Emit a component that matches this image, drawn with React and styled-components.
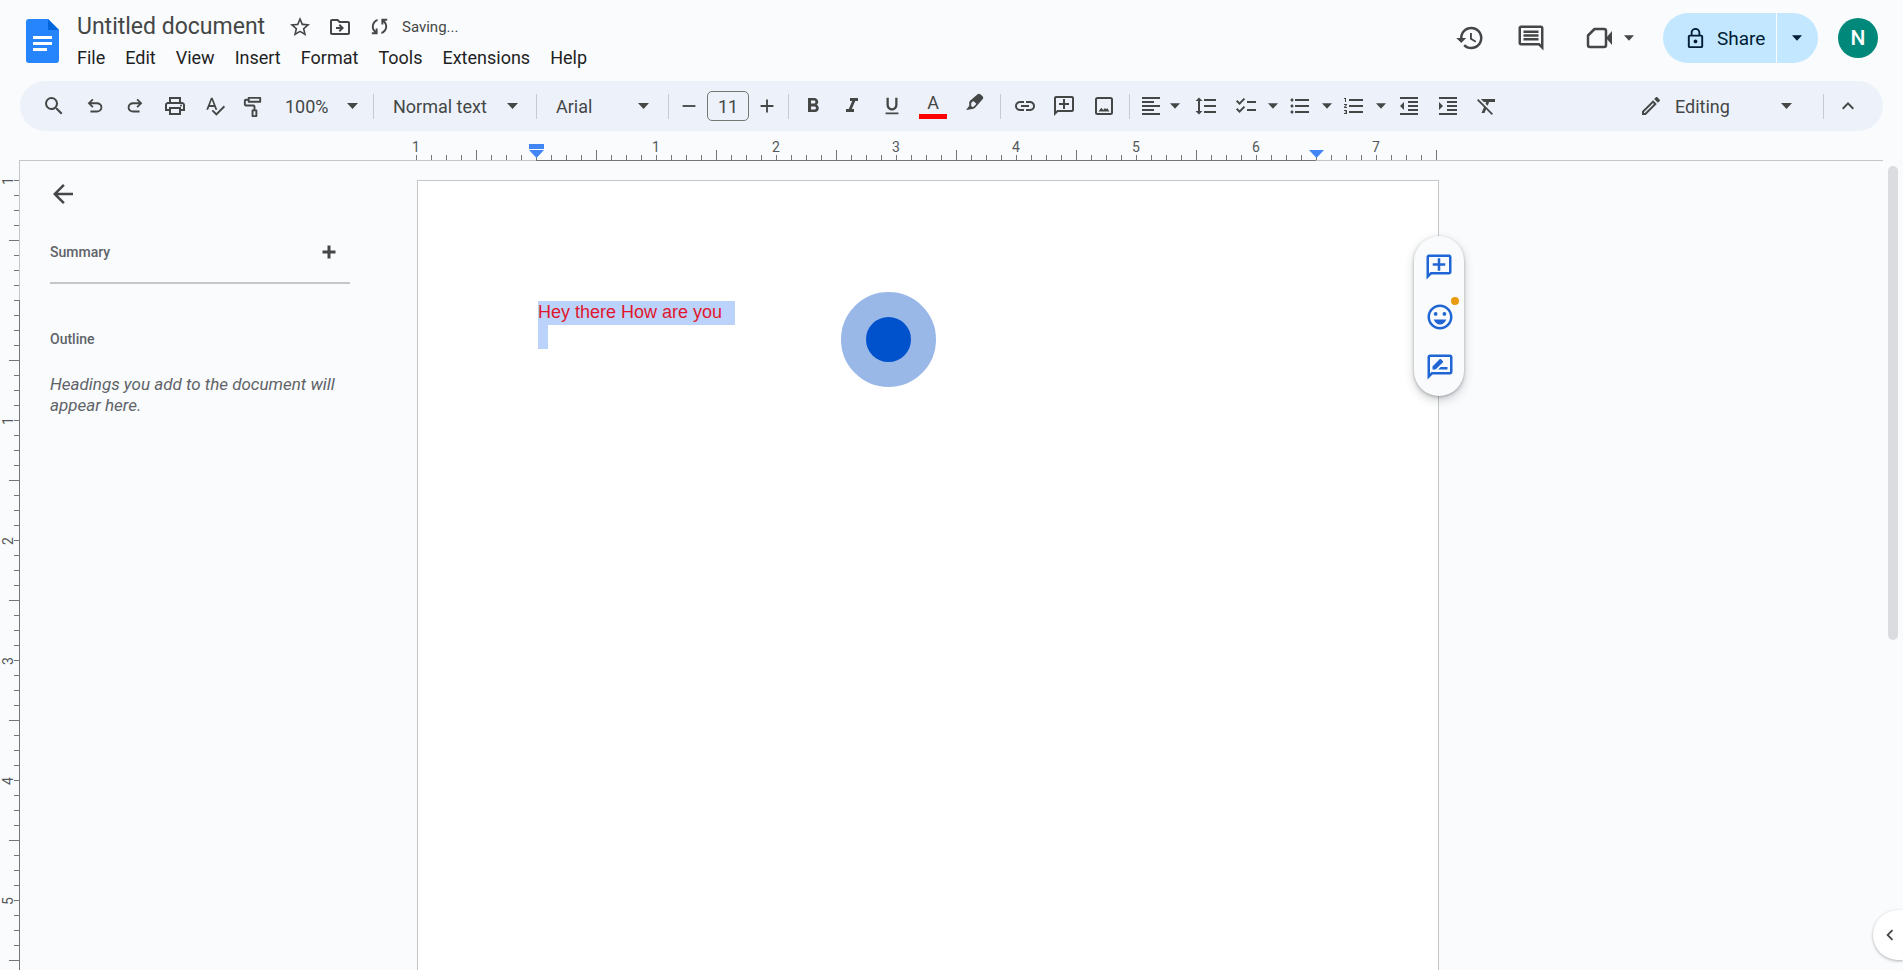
import React from 'react';
import styled, { createGlobalStyle, css } from 'styled-components';
import {
  MdAdd, MdArrowBack, MdChecklist, MdExpandLess, MdChevronLeft, MdFormatAlignLeft, MdFormatBold,
  MdFormatClear, MdFormatIndentDecrease, MdFormatIndentIncrease, MdFormatItalic, MdFormatLineSpacing,
  MdFormatListBulleted, MdFormatListNumbered, MdFormatUnderlined, MdHistory, MdLink, MdLockOutline,
  MdOutlineAddComment, MdOutlineComment, MdOutlineDriveFileMove, MdOutlineEdit, MdOutlineEmojiEmotions,
  MdOutlineImagesearchRoller, MdOutlinePrint, MdOutlineRateReview, MdRemove, MdSearch,
  MdSpellcheck, MdStarOutline,
} from 'react-icons/md';

const ink = '#444746';
const rule = '#c4c7c5';
const ruleDark = '#747775';
const INCH = 120;

const GlobalStyle = createGlobalStyle`
  *, *::before, *::after { box-sizing: border-box; }
  body { margin: 0; background: #f9fbfd; color: ${ink}; font-family: Roboto, "Liberation Sans", sans-serif; }
  button, input, select { font: inherit; color: inherit; margin: 0; padding: 0; border: 0; background: none; }
  button { cursor: pointer; }
  svg { display: block; flex: none; }
`;

const Shell = styled.div`
  display: flex;
  flex-direction: column;
  height: 100vh;
  overflow: hidden;
  position: relative;
`;

/* Header */
const Header = styled.header`
  display: flex;
  align-items: flex-start;
  height: 81px;
  flex: none;
  padding: 0 25px 0 26px;
`;
const Logo = styled.a`
  padding-top: 19px;
  width: 51px;
`;
const TitleBlock = styled.div`
  padding-top: 10px;
`;
const TitleRow = styled.div`
  display: flex;
  align-items: center;
  height: 33px;
`;
const TitleInput = styled.input`
  width: 203px;
  height: 32px;
  font-size: 23px;
`;
const IconButton = styled.button`
  display: flex;
  align-items: center;
  justify-content: center;
  width: ${(p) => p.$w || 39}px;
  height: 38px;
  flex: none;
  svg { ${(p) => p.$flip && css`transform: scaleX(-1);`} }
`;
const SaveState = styled.span`
  font-size: 15px;
  padding-left: 3px;
`;
const MenuBar = styled.nav`
  display: flex;
  gap: 20px;
  height: 28px;
  align-items: center;
`;
const MenuItem = styled.button`
  font-size: 18px;
  color: #1f1f1f;
`;
const HeaderActions = styled.div`
  display: flex;
  align-items: center;
  margin-left: auto;
  padding-top: 13px;
`;
const MeetButton = styled.button`
  display: flex;
  align-items: center;
  gap: 11px;
  padding: 0 29px 0 25px;
`;
const ShareGroup = styled.div`
  display: flex;
  gap: 1px;
  height: 50px;
  margin-right: 20px;
  color: #001d35;
`;
const ShareButton = styled.button`
  display: flex;
  align-items: center;
  gap: 10px;
  width: 113px;
  padding-left: 21px;
  font-size: 19px;
  background: #c2e7ff;
  border-radius: 25px 0 0 25px;
`;
const ShareMore = styled.button`
  display: flex;
  align-items: center;
  width: 41px;
  padding-left: 15px;
  background: #c2e7ff;
  border-radius: 0 25px 25px 0;
`;
const Avatar = styled.button`
  width: 40px;
  height: 40px;
  border-radius: 50%;
  background: #00897b;
  color: #fff;
  font-size: 21px;
  font-weight: 500;
`;

/* Toolbar */
const Toolbar = styled.div`
  display: flex;
  align-items: center;
  height: 50px;
  flex: none;
  margin: 0 20px;
  padding: 0 16px 0 13px;
  border-radius: 25px;
  background: #edf2fa;
`;
const Divider = styled.i`
  width: 1px;
  height: 25px;
  flex: none;
  background: #c7cacf;
  margin: 0 ${(p) => p.$right ?? 4}px 0 ${(p) => p.$left ?? 4}px;
`;
const Dropdown = styled.label`
  display: grid;
  align-items: center;
  flex: none;
  width: ${(p) => p.$w}px;
  font-size: 18px;
  > * { grid-area: 1 / 1; }
  > svg { justify-self: end; pointer-events: none; }
  select { appearance: none; width: 100%; outline: 0; }
`;
const ZoomSlot = styled.div`
  flex: none;
  padding-left: 12px;
`;
const SizeInput = styled.input`
  width: 42px;
  height: 30px;
  border: 1px solid ${ruleDark};
  border-radius: 5px;
  text-align: center;
  font-size: 18px;
`;
const ColorButton = styled(IconButton)`
  flex-direction: column;
  gap: 3px;
  font-size: 18px;
  line-height: 17px;
  &::after { content: ''; width: 28px; height: 5px; background: #f00; }
`;
const WithCaret = styled.div`
  display: flex;
  align-items: center;
  width: ${(p) => p.$w}px;
  flex: none;
`;
const CaretButton = styled.button`
  display: flex;
  align-items: center;
  height: 38px;
  padding-left: ${(p) => p.$gap || 0}px;
`;
const ModeGroup = styled.div`
  display: flex;
  align-items: center;
  gap: 12px;
  margin-left: auto;
`;

/* Rulers */
const RulerRow = styled.div`
  display: flex;
  height: 30px;
  flex: none;
  margin: 0 20px 0 19px;
  border-bottom: 1px solid ${rule};
`;
const Ruler = styled.div`
  position: relative;
  display: flex;
  flex: none;
  margin-left: 397px;
  width: 1021px;
  height: 30px;
  background:
    linear-gradient(${ruleDark}, ${ruleDark}) 120px 29px / 780px 1px no-repeat,
    repeating-linear-gradient(90deg, ${ruleDark} 0 1px, transparent 1px 15px) 0 24px / 100% 5px no-repeat,
    repeating-linear-gradient(90deg, transparent 0 60px, ${ruleDark} 60px 61px, transparent 61px 120px) 0 19px / 100% 10px no-repeat;
`;
const InchLabel = styled.span`
  flex: none;
  width: ${INCH}px;
  margin-left: ${(p) => (p.$first ? -INCH / 2 : 0)}px;
  text-align: center;
  font-size: 14px;
  line-height: 32px;
  color: #55585a;
`;
const Indent = styled.svg`
  position: absolute;
  top: 13px;
  left: ${(p) => p.$at}px;
  margin-left: -7px;
`;
const SideRuler = styled.div`
  flex: none;
  width: 20px;
  padding-top: 20px;
  background:
    linear-gradient(${rule}, ${rule}) 19px 0 / 1px 139px no-repeat,
    linear-gradient(${ruleDark}, ${ruleDark}) 19px 139px / 1px 100% no-repeat,
    repeating-linear-gradient(${ruleDark} 0 1px, transparent 1px 15px) 14px 19px / 5px 100% no-repeat,
    repeating-linear-gradient(transparent 0 60px, ${ruleDark} 60px 61px, transparent 61px 120px) 9px 19px / 10px 100% no-repeat;
`;
const SideLabel = styled.span`
  display: flex;
  align-items: center;
  justify-content: center;
  width: 16px;
  height: ${INCH}px;
  margin-top: ${(p) => (p.$first ? -INCH / 2 : 0)}px;
  writing-mode: vertical-rl;
  transform: rotate(180deg);
  font-size: 14px;
  line-height: 16px;
  color: #55585a;
`;

/* Body */
const Body = styled.div`
  display: flex;
  flex: 1;
  min-height: 0;
`;
const Sidebar = styled.aside`
  flex: none;
  width: 397px;
  padding: 13px 67px 0 30px;
`;
const BackButton = styled.button`
  display: flex;
  margin-left: -2px;
  padding: 5px 0;
`;
const SummaryRow = styled.div`
  display: flex;
  align-items: center;
  justify-content: space-between;
  height: 68px;
  padding: 0 10px 0 0;
`;
const SummarySection = styled.section`
  border-bottom: 2px solid ${rule};
  height: 66px;
  margin-top: 4px;
`;
const SideHeading = styled.h2`
  margin: 0;
  font-size: 14px;
  line-height: 20px;
  font-weight: 500;
  color: #5f6368;
`;
const OutlineSection = styled.section`
  padding-top: 45px;
  p {
    margin: 25px 0 0;
    font-size: 17px;
    line-height: 21px;
    font-style: italic;
    color: #5f6368;
  }
`;
const Page = styled.main`
  position: relative;
  flex: none;
  width: 1022px;
  height: 1320px;
  margin-top: 19px;
  padding: 120px;
  border: 1px solid ${rule};
  background: #fff;
`;
const Line = styled.p`
  margin: 0;
  font-family: "Liberation Sans", Arial, sans-serif;
  font-size: 18px;
  line-height: 23px;
  height: 24px;
  color: #e0162b;
`;
const Selected = styled.span`
  display: inline-block;
  height: 24px;
  vertical-align: top;
  padding-right: ${(p) => p.$tail}px;
  background: #bbd3fb;
`;
const ClickMark = styled.div`
  position: absolute;
  left: 423px;
  top: 111px;
  width: 95px;
  height: 95px;
  border-radius: 50%;
  border: 25px solid #99b8e8;
  background: #0052cc;
`;
const FloatingActions = styled.div`
  position: absolute;
  right: -26px;
  top: 55px;
  display: flex;
  flex-direction: column;
  align-items: center;
  padding: 6px 0 4px;
  width: 50px;
  border-radius: 25px;
  background: #f9fbfd;
  color: #1f65d3;
  box-shadow: 0 1px 3px rgba(60, 64, 67, 0.35), 0 4px 10px rgba(60, 64, 67, 0.25);
`;
const FloatButton = styled(IconButton)`
  position: relative;
  padding-left: ${(p) => (p.$flip ? 0 : 1)}px;
  width: 50px;
  height: 50px;
`;
const Dot = styled.i`
  position: absolute;
  top: 5px;
  right: 5px;
  width: 8px;
  height: 8px;
  border-radius: 50%;
  background: #ea9a0e;
`;
const ScrollThumb = styled.div`
  width: 10px;
  height: 474px;
  margin: 5px 5px 0 auto;
  border-radius: 5px;
  background: #dadce0;
`;
const PanelToggle = styled.button`
  position: absolute;
  right: 0;
  bottom: 10px;
  display: flex;
  align-items: center;
  padding-left: 6px;
  width: 30px;
  height: 50px;
  border-radius: 25px 0 0 25px;
  background: #fff;
  color: ${ink};
  box-shadow: 0 1px 3px rgba(60, 64, 67, 0.4);
`;

const Caret = ({ size = 11 }) => (
  <svg width={size} height="6" viewBox="0 0 11 6" fill="currentColor"><path d="M0 0h11L5.500 6z" /></svg>
);
const Symbol = ({ d, size = 24 }) => (
  <svg width={size} height={size} viewBox="0 -960 960 960" fill="currentColor"><path d={d} /></svg>
);
const undoPath = 'M280-200v-80h284q63 0 109.500-40T720-420q0-60-46.500-100T564-560H312l104 104-56 56-200-200 200-200 56 56-104 104h252q97 0 169.500 63T800-420q0 94-72.500 157T564-200H280Z';
const redoPath = 'M396-200q-97 0-169.500-63T160-420q0-94 66.500-157T396-640h252L544-744l56-56 200 200-200 200-56-56 104-104H396q-63 0-109.500 40T240-420q0 60 46.500 100T396-280h284v80H396Z';
const syncPath = 'M160-160v-80h110l-16-14q-52-46-73-105t-21-119q0-111 66.500-197.500T400-790v84q-72 26-116 88.500T240-478q0 45 17 87.500t53 78.500l10 10v-98h80v240H160Zm400-10v-84q72-26 116-88.500T720-482q0-45-17-87.500T650-648l-10-10v98h-80v-240h240v80H690l16 14q49 49 71.500 106.500T800-482q0 111-66.500 197.500T560-170Z';

const DocsLogo = () => (
  <svg width="33" height="44" viewBox="0 0 33 44">
    <path d="M3 0h19l11 11v30a3 3 0 0 1-3 3H3a3 3 0 0 1-3-3V3a3 3 0 0 1 3-3z" fill="#2684fc" />
    <path d="M22 0l11 11H22z" fill="#0066da" />
    <path d="M7 17h19v3H7zM7 23h19v3H7zM7 29h14v3H7z" fill="#fff" />
  </svg>
);
const Meet = () => (
  <svg width="27" height="22" viewBox="0 0 27 22" fill="none" stroke="currentColor" strokeWidth="2.500" strokeLinejoin="round">
    <path d="M8.500 2H18a2 2 0 0 1 2 2v14a2 2 0 0 1-2 2H4a2 2 0 0 1-2-2V8.500z" />
    <path d="M20 11l6-7v14z" fill="currentColor" stroke="none" />
  </svg>
);
const Highlighter = () => (
  <svg width="18" height="26" viewBox="0 0 18 26" fill="currentColor" fillRule="evenodd">
    <path d="M11.600 1.300Q13 .2 14.300 1.300l2.300 1.900q1.300 1.200.2 2.700L9.300 14.400Q8.200 15.700 6.500 15.900L0 17l3.300-4.200-.1-3.100Q3.300 8.500 4.300 7.600zM7.300 7.900L5.200 10v3l1.200 1.100 1.500-.6L10.400 10.700z" />
  </svg>
);
const Picture = () => (
  <svg width="24" height="24" viewBox="0 0 24 24" fill="currentColor">
    <rect x="4" y="4" width="16" height="16" rx="1.500" fill="none" stroke="currentColor" strokeWidth="2" />
    <path d="M6.500 17.500l2.800-3.800 2 2.300 1.600-2 1.200 1.300 1-1.300 2.400 3.500z" />
  </svg>
);
const BoldPlus = () => (
  <svg width="22" height="22" viewBox="0 0 22 22" fill="currentColor">
    <path d="M9.500 4.500h3v5h5v3h-5v5h-3v-5h-5v-3h5z" />
  </svg>
);

const Tool = ({ label, children, ...rest }) => <IconButton aria-label={label} {...rest}>{children}</IconButton>;
const Choice = ({ label, value, w }) => (
  <Dropdown $w={w}>
    <select aria-label={label} defaultValue={value}><option>{value}</option></select>
    <Caret />
  </Dropdown>
);
const ToolWithCaret = ({ label, w, gap, children }) => (
  <WithCaret $w={w}>
    <IconButton $w={38} aria-label={label}>{children}</IconButton>
    <CaretButton $gap={gap} aria-label={`${label} options`}><Caret size={10} /></CaretButton>
  </WithCaret>
);

const menus = ['File', 'Edit', 'View', 'Insert', 'Format', 'Tools', 'Extensions', 'Help'];
const inches = ['1', '', '1', '2', '3', '4', '5', '6', '7'];
const sideInches = ['1', '', '1', '2', '3', '4', '5'];

export default function App() {
  return (
    <Shell>
      <GlobalStyle />
      <Header>
        <Logo href="#" aria-label="Docs home"><DocsLogo /></Logo>
        <TitleBlock>
          <TitleRow>
            <TitleInput aria-label="Document title" defaultValue="Untitled document" />
            <Tool label="Star" $w={39}><MdStarOutline size={24} /></Tool>
            <Tool label="Move" $w={41}><MdOutlineDriveFileMove size={24} /></Tool>
            <Tool label="Sync status" $w={39}><Symbol d={syncPath} size={23} /></Tool>
            <SaveState>Saving...</SaveState>
          </TitleRow>
          <MenuBar>{menus.map((m) => <MenuItem key={m}>{m}</MenuItem>)}</MenuBar>
        </TitleBlock>
        <HeaderActions>
          <Tool label="Version history" $w={61}><MdHistory size={30} /></Tool>
          <Tool label="Comments" $w={61}><MdOutlineComment size={30} /></Tool>
          <MeetButton aria-label="Join a call"><Meet /><Caret size={10} /></MeetButton>
          <ShareGroup>
            <ShareButton><MdLockOutline size={23} />Share</ShareButton>
            <ShareMore aria-label="Share options"><Caret size={10} /></ShareMore>
          </ShareGroup>
          <Avatar aria-label="Account">N</Avatar>
        </HeaderActions>
      </Header>

      <Toolbar role="toolbar">
        <Tool label="Search menus" $w={42}><MdSearch size={24} /></Tool>
        <Tool label="Undo" $w={40}><Symbol d={undoPath} size={22} /></Tool>
        <Tool label="Redo" $w={40}><Symbol d={redoPath} size={22} /></Tool>
        <Tool label="Print" $w={40}><MdOutlinePrint size={24} /></Tool>
        <Tool label="Spelling check"><MdSpellcheck size={22} /></Tool>
        <Tool label="Paint format"><MdOutlineImagesearchRoller size={23} /></Tool>
        <ZoomSlot><Choice label="Zoom" value="100%" w={73} /></ZoomSlot>
        <Divider $left={15} $right={19} />
        <Choice label="Styles" value="Normal text" w={125} />
        <Divider $left={18} $right={19} />
        <Choice label="Font" value="Arial" w={93} />
        <Divider $left={19} $right={2} />
        <Tool label="Decrease font size" $w={36}><MdRemove size={22} /></Tool>
        <SizeInput aria-label="Font size" defaultValue="11" />
        <Tool label="Increase font size" $w={35}><MdAdd size={22} /></Tool>
        <Divider />
        <Tool label="Bold"><MdFormatBold size={24} /></Tool>
        <Tool label="Italic"><MdFormatItalic size={24} /></Tool>
        <Tool label="Underline" $w={41}><MdFormatUnderlined size={22} /></Tool>
        <ColorButton aria-label="Text color" $w={42}>A</ColorButton>
        <Tool label="Highlight color" $w={42}><Highlighter /></Tool>
        <Divider />
        <Tool label="Insert link"><MdLink size={24} /></Tool>
        <Tool label="Add comment" $flip><MdOutlineAddComment size={24} /></Tool>
        <Tool label="Insert image" $w={42}><Picture /></Tool>
        <Divider $right={2} />
        <ToolWithCaret label="Align" w={53}><MdFormatAlignLeft size={24} /></ToolWithCaret>
        <Tool label="Line spacing" $w={42}><MdFormatLineSpacing size={24} /></Tool>
        <ToolWithCaret label="Checklist" w={54} gap={3}><MdChecklist size={24} /></ToolWithCaret>
        <ToolWithCaret label="Bulleted list" w={54} gap={3}><MdFormatListBulleted size={24} /></ToolWithCaret>
        <ToolWithCaret label="Numbered list" w={54} gap={3}><MdFormatListNumbered size={24} /></ToolWithCaret>
        <Tool label="Decrease indent"><MdFormatIndentDecrease size={24} /></Tool>
        <Tool label="Increase indent"><MdFormatIndentIncrease size={24} /></Tool>
        <Tool label="Clear formatting"><MdFormatClear size={24} /></Tool>
        <ModeGroup>
          <MdOutlineEdit size={24} />
          <Choice label="Mode" value="Editing" w={117} />
        </ModeGroup>
        <Divider $left={31} $right={4} />
        <Tool label="Hide the menus"><MdExpandLess size={24} /></Tool>
      </Toolbar>

      <RulerRow>
        <Ruler>
          {inches.map((n, i) => <InchLabel key={i} $first={i === 0}>{n}</InchLabel>)}
          <Indent $at={120} width="15" height="15" fill="#4285f4"><path d="M0 0h15v5H0zM0 6h15L7.500 14z" /></Indent>
          <Indent $at={900} width="15" height="15" fill="#4285f4"><path d="M0 6h15L7.500 14z" /></Indent>
        </Ruler>
      </RulerRow>

      <Body>
        <SideRuler>
          {sideInches.map((n, i) => <SideLabel key={i} $first={i === 0}>{n}</SideLabel>)}
        </SideRuler>
        <Sidebar>
          <BackButton aria-label="Close outline"><MdArrowBack size={30} /></BackButton>
          <SummarySection>
            <SummaryRow>
              <SideHeading>Summary</SideHeading>
              <button aria-label="Add summary"><BoldPlus /></button>
            </SummaryRow>
          </SummarySection>
          <OutlineSection>
            <SideHeading>Outline</SideHeading>
            <p>Headings you add to the document will appear here.</p>
          </OutlineSection>
        </Sidebar>
        <Page>
          <Line><Selected $tail={13}>Hey there How are you</Selected></Line>
          <Line><Selected $tail={10} /></Line>
          <ClickMark />
          <FloatingActions>
            <FloatButton aria-label="Add comment" $flip><MdOutlineAddComment size={30} /></FloatButton>
            <FloatButton aria-label="Add emoji reaction"><MdOutlineEmojiEmotions size={30} /><Dot /></FloatButton>
            <FloatButton aria-label="Suggest edits"><MdOutlineRateReview size={30} /></FloatButton>
          </FloatingActions>
        </Page>
        <ScrollThumb />
      </Body>
      <PanelToggle aria-label="Show side panel"><MdChevronLeft size={22} /></PanelToggle>
    </Shell>
  );
}
